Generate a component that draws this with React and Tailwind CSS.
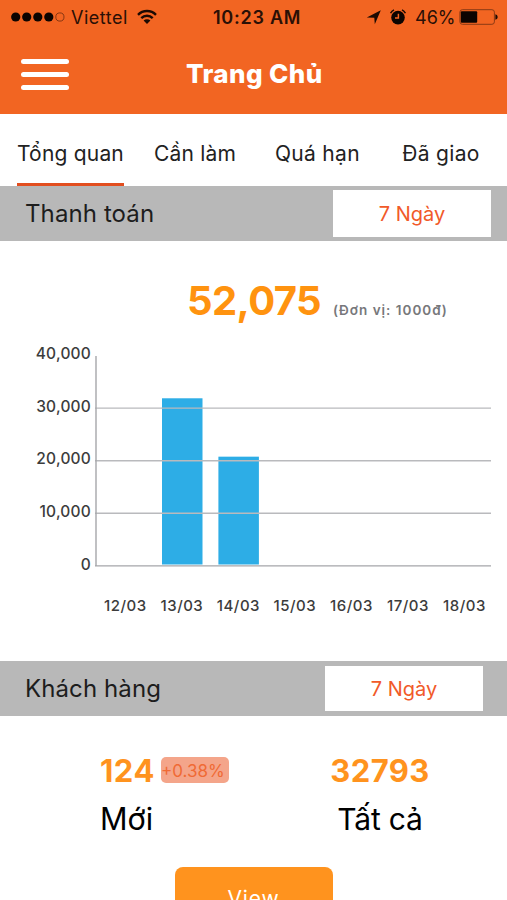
const tabs = [
  { label: 'Tổng quan', className: 'w-[107px] ml-[17px] tracking-[0.2px]', active: true },
  { label: 'Cần làm', className: 'w-[82px] ml-[30px] tracking-[0.2px]' },
  { label: 'Quá hạn', className: 'w-[84px] ml-[39px] tracking-[0.3px]' },
  { label: 'Đã giao', className: 'w-[78px] ml-[43px] tracking-[0.3px]' },
];

const payments = [
  { day: '12/03', value: 0 },
  { day: '13/03', value: 31600 },
  { day: '14/03', value: 20500 },
  { day: '15/03', value: 0 },
  { day: '16/03', value: 0 },
  { day: '17/03', value: 0 },
  { day: '18/03', value: 0 },
];

const ticks = ['40,000', '30,000', '20,000', '10,000', '0'];

function StatusBar() {
  return (
    <div className="flex items-center h-[34px] pl-[11px] text-[#2a1006] text-[18px] whitespace-nowrap">
      <svg width="55" height="12" viewBox="0 0 55 12" fill="#0c0401">
        <circle cx="4.7" cy="6" r="4.6" />
        <circle cx="15.7" cy="6" r="4.6" />
        <circle cx="26.8" cy="6" r="4.6" />
        <circle cx="37.8" cy="6" r="4.6" />
        <circle cx="48.9" cy="6" r="4.1" fill="none" stroke="#7a3111" strokeWidth="0.9" />
      </svg>
      <span className="w-[57px] ml-[5px] tracking-[0.5px]">Viettel</span>
      <svg className="ml-[9px]" width="20" height="16" viewBox="0 0 20 16" fill="none" stroke="#1c0a03" strokeWidth="2.4">
        <path d="M1 5.8a12.7 12.7 0 0 1 18 0" />
        <path d="M4.3 9.2a8 8 0 0 1 11.4 0" />
        <path d="M10 15 6.6 11.6a4.8 4.8 0 0 1 6.8 0Z" fill="#1c0a03" stroke="none" />
      </svg>
      <span className="w-[88px] ml-[56px] font-semibold tracking-[0.75px]">10:23 AM</span>
      <svg className="ml-[65px]" width="16" height="16" viewBox="0 0 16 16" fill="#1c0a03">
        <path d="M14.8 1.2 8.8 15.2 8.3 8.8.8 8.6Z" />
      </svg>
      <svg className="ml-[8px]" width="16" height="16" viewBox="0 0 16 16" fill="none">
        <circle cx="8" cy="8.6" r="6.8" fill="#0c0401" />
        <path d="M8.4 4.8v4.3H5" stroke="#f26522" strokeWidth="1.5" />
        <path d="M.6 4.2A7.4 7.4 0 0 1 4 .9M15.4 4.2A7.4 7.4 0 0 0 12 .9" stroke="#1c0a03" strokeWidth="1.5" />
      </svg>
      <span className="w-[39px] ml-[9px]">46%</span>
      <svg className="ml-[5px]" width="39" height="16" viewBox="0 0 39 16">
        <rect x="0.9" y="0.7" width="34.5" height="14.6" rx="2.5" fill="none" stroke="#8a3a15" />
        <rect x="1.8" y="2.3" width="16.4" height="11.4" rx="1" fill="#0c0401" />
        <path d="M36.4 5.2c3 .8 3 4.8 0 5.6Z" fill="#1c0a03" />
      </svg>
    </div>
  );
}

function SectionBar({ title, className }) {
  return (
    <div className="flex h-[55px] bg-[#b8b8b8]">
      <h2 className="ml-[25px] text-[24px] leading-[55px] flex-1 tracking-[0.1px] text-[#1d1d1d]">{title}</h2>
      <button className={`bg-white text-[#f15a29] text-[20px] w-[158px] ${className}`}>7 Ngày</button>
    </div>
  );
}

function PaymentChart() {
  return (
    <svg width="507" height="285" viewBox="0 0 507 285" className="block">
      {payments.map((item, i) => {
        const height = (item.value / 10000) * 52.6;
        return (
          <g key={item.day}>
            {item.value > 0 && (
              <rect x={162 + (i - 1) * 56.4} y={228.5 - height} width="40.5" height={height} fill="#2dade6" />
            )}
            <text
              x={125.4 + i * 56.5}
              y="275"
              textAnchor="middle"
              fontSize="15"
              fontWeight="500"
              letterSpacing="0.5"
              fill="#3c3c3c"
            >
              {item.day}
            </text>
          </g>
        );
      })}
      {ticks.map((tick, i) => (
        <g key={tick}>
          {i > 0 && (
            <path d={`M95 ${19.5 + i * 52.6}H491`} stroke={tick === '0' ? '#a5a6aa' : '#b9babd'} strokeWidth="1.4" />
          )}
          <text
            x="91"
            y={23.2 + i * 52.6}
            textAnchor="end"
            fontSize="15.5"
            fontWeight="500"
            letterSpacing="0.2"
            fill="#3c3c3c"
          >
            {tick}
          </text>
        </g>
      ))}
      <path d="M96 20V230" stroke="#a5a6aa" strokeWidth="1.4" />
    </svg>
  );
}

export default function App() {
  return (
    <div className="w-[507px] h-[900px] overflow-hidden bg-white text-black font-['Inter',sans-serif]">
      <header className="h-[114px] bg-[#f26522]">
        <StatusBar />
        <div className="flex items-center h-[80px] pl-[21px]">
          <button className="flex flex-col gap-[8px]">
            <span className="w-[48px] h-[5px] rounded-full bg-white" />
            <span className="w-[48px] h-[5px] rounded-full bg-white" />
            <span className="w-[48px] h-[5px] rounded-full bg-white" />
          </button>
          <h1 className="ml-[117px] text-[26px] leading-[38px] font-extrabold tracking-[0.4px] text-white whitespace-nowrap">
            Trang Chủ
          </h1>
        </div>
      </header>

      <nav className="flex h-[72px] text-[21px] text-[#222] whitespace-nowrap">
        {tabs.map((tab) => (
          <button
            key={tab.label}
            className={`pt-[11px] border-b-[3px] ${tab.active ? 'border-[#e24e1f]' : 'border-transparent'} ${tab.className}`}
          >
            {tab.label}
          </button>
        ))}
      </nav>

      <section>
        <SectionBar title="Thanh toán" className="h-[47px] mt-[4px] mr-[16px]" />
        <div className="flex items-baseline h-[95px] pl-[187px] pt-[35px] whitespace-nowrap">
          <span className="w-[134px] text-[40px] leading-[50px] font-bold tracking-[-0.6px] text-[#ff930f]">52,075</span>
          <span className="ml-[12px] text-[13.5px] font-semibold tracking-[1px] text-[#77787b]">(Đơn vị: 1000đ)</span>
        </div>
        <PaymentChart />
      </section>

      <section className="pt-[40px]">
        <SectionBar title="Khách hàng" className="h-[45px] mt-[5px] mr-[24px]" />
        <div className="flex pt-[35px] whitespace-nowrap">
          <div className="w-[230px] ml-[100px]">
            <div className="flex items-center h-[40px]">
              <span className="w-[55px] text-[31px] font-bold tracking-[0.5px] text-[#ff931e]">124</span>
              <span className="w-[68px] h-[26px] ml-[6px] -mt-[2px] rounded-[5px] bg-[#f4a58a] text-[#f06a35] text-[17px] leading-[28px]">
                +0.38%
              </span>
            </div>
            <p className="text-[30.5px] leading-[56px]">Mới</p>
          </div>
          <div className="w-[100px] text-center">
            <div className="h-[40px] text-[31px] leading-[40px] font-bold tracking-[0.4px] text-[#ff931e]">32793</div>
            <p className="text-[30px] leading-[56px] tracking-[-0.2px]">Tất cả</p>
          </div>
        </div>
        <button className="block w-[158px] h-[60px] mt-[20px] mx-auto pt-[3px] rounded-[8px] bg-[#ff931e] text-white text-[21px] tracking-[0.8px]">
          View
        </button>
      </section>
    </div>
  );
}
